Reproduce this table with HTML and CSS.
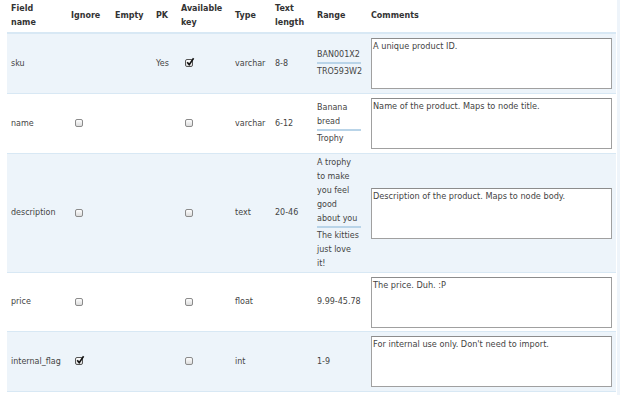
FILE: index.html
```html
<!DOCTYPE html>
<html>
<head>
<meta charset="utf-8">
<link rel="stylesheet" href="styles.css">
</head>
<body>
<div class="page">
<table class="fields">
  <colgroup>
    <col class="c-name"><col class="c-ignore"><col class="c-empty"><col class="c-pk"><col class="c-avail"><col class="c-type"><col class="c-len"><col class="c-range"><col class="c-comments">
  </colgroup>
  <thead>
    <tr>
      <th>Field<br>name</th>
      <th>Ignore</th>
      <th>Empty</th>
      <th>PK</th>
      <th>Available<br>key</th>
      <th>Type</th>
      <th>Text<br>length</th>
      <th>Range</th>
      <th>Comments</th>
    </tr>
  </thead>
  <tbody>
    <tr class="odd r-sku">
      <td>sku</td>
      <td></td>
      <td></td>
      <td>Yes</td>
      <td><span class="cb checked"><svg viewBox="0 0 10 10" width="10" height="10"><path d="M2.2 5.2 L4.2 7.6 L8.6 1.2" fill="none" stroke="#111" stroke-width="1.6"/></svg></span></td>
      <td>varchar</td>
      <td>8-8</td>
      <td><div class="range"><div class="rv">BAN001X2</div><div class="rv">TRO593W2</div></div></td>
      <td><textarea class="comment">A unique product ID.</textarea></td>
    </tr>
    <tr class="even r-name">
      <td>name</td>
      <td><span class="cb"></span></td>
      <td></td>
      <td></td>
      <td><span class="cb"></span></td>
      <td>varchar</td>
      <td>6-12</td>
      <td><div class="range"><div class="rv">Banana bread</div><div class="rv">Trophy</div></div></td>
      <td><textarea class="comment">Name of the product. Maps to node title.</textarea></td>
    </tr>
    <tr class="odd r-desc">
      <td>description</td>
      <td><span class="cb"></span></td>
      <td></td>
      <td></td>
      <td><span class="cb"></span></td>
      <td>text</td>
      <td>20-46</td>
      <td><div class="range"><div class="rv">A trophy to make you feel good about you</div><div class="rv">The kitties just love it!</div></div></td>
      <td><textarea class="comment">Description of the product. Maps to node body.</textarea></td>
    </tr>
    <tr class="even r-price">
      <td>price</td>
      <td><span class="cb"></span></td>
      <td></td>
      <td></td>
      <td><span class="cb"></span></td>
      <td>float</td>
      <td></td>
      <td><div class="range"><div class="rv single">9.99-45.78</div></div></td>
      <td><textarea class="comment">The price. Duh. :P</textarea></td>
    </tr>
    <tr class="odd r-flag">
      <td>internal_flag</td>
      <td><span class="cb checked"><svg viewBox="0 0 10 10" width="10" height="10"><path d="M2.2 5.2 L4.2 7.6 L8.6 1.2" fill="none" stroke="#111" stroke-width="1.6"/></svg></span></td>
      <td></td>
      <td></td>
      <td><span class="cb"></span></td>
      <td>int</td>
      <td></td>
      <td><div class="range"><div class="rv single">1-9</div></div></td>
      <td><textarea class="comment">For internal use only. Don't need to import.</textarea></td>
    </tr>
  </tbody>
</table>
</div>
</body>
</html>
```
FILE: styles.css
```css
html, body {
  margin: 0;
  padding: 0;
  background: #fff;
}
body {
  font-family: "DejaVu Sans", Verdana, sans-serif;
  font-size: 8px;
  color: #444;
}
.page {
  width: 610px;
  padding-left: 7px;
  border-right: 3px solid #eef4fa;
  min-height: 395px;
}
.fields {
  border-collapse: collapse;
  table-layout: fixed;
  width: 609px;
}
.c-name { width: 60px; }
.c-ignore { width: 44px; }
.c-empty { width: 41px; }
.c-pk { width: 25px; }
.c-avail { width: 54px; }
.c-type { width: 40px; }
.c-len { width: 42px; }
.c-range { width: 54px; }
.c-comments { width: 249px; }

.fields th {
  font-weight: bold;
  color: #333;
  text-align: left;
  vertical-align: middle;
  height: 32px;
  padding: 0 4px;
  line-height: 14px;
  border-bottom: 2px solid #d8e8f4;
}
.fields td {
  padding: 0 4px;
  vertical-align: middle;
  line-height: 14px;
  border-bottom: 1px solid #d8e8f4;
}
.odd td { background: #edf4fa; }
.even td { background: #fff; }
.r-sku td { height: 59px; }
.r-name td { height: 59px; }
.r-desc td { height: 118px; }
.r-price td { height: 58px; }
.r-flag td { height: 59px; }

.range {
  width: 44px;
}
.rv:first-child:not(.single) {
  padding-bottom: 2px;
  background: linear-gradient(#b9d4e8, #b9d4e8) no-repeat left 0 bottom 0 / 100% 2px;
  margin-bottom: 1px;
}

.cb {
  display: inline-block;
  box-sizing: border-box;
  width: 8px;
  height: 8px;
  border: 1px solid #8b8b8b;
  border-radius: 2px;
  background: linear-gradient(#fdfdfd, #dcdcdc);
  vertical-align: middle;
  position: relative;
  margin-left: 4px;
}
.cb.checked {
  border-color: #555;
}
.cb svg {
  position: absolute;
  left: -1px;
  top: -3px;
}

.comment {
  display: block;
  box-sizing: border-box;
  width: 241px;
  height: 51px;
  margin: 0;
  padding: 2px 1px;
  border: 1px solid #a0a0a0;
  border-top-color: #8c8c8c;
  background: #fff;
  font-family: "DejaVu Sans", Verdana, sans-serif;
  font-size: 8.2px;
  line-height: 11px;
  color: #444;
  resize: none;
  overflow: hidden;
}
```
